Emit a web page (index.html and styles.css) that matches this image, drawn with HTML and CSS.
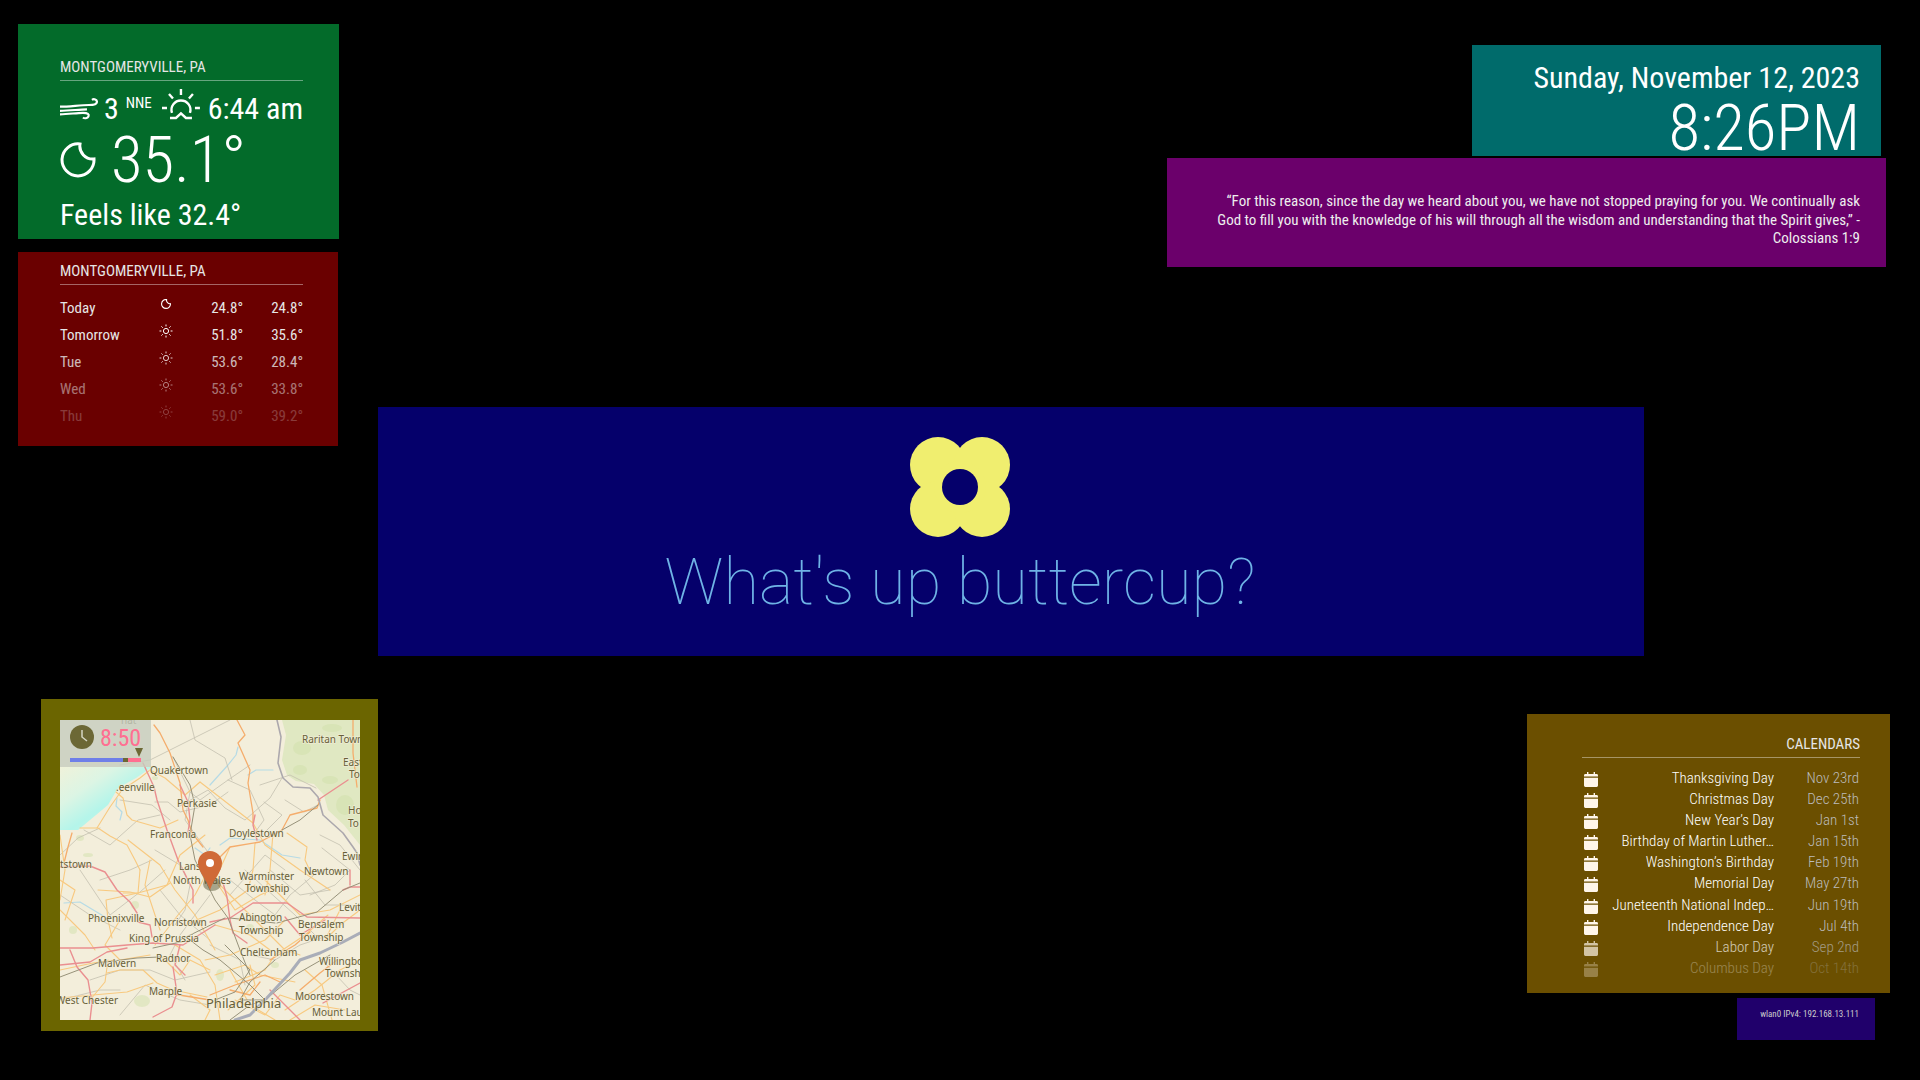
FILE: index.html
```html
<!DOCTYPE html>
<html>
<head>
    <meta charset="UTF-8">
    <title>Mirror</title>
    <link rel="stylesheet" href="styles.css">
</head>
<body>
<svg class="defs" width="0" height="0">
    <symbol id="sun" viewBox="0 0 14 14">
        <circle cx="7" cy="7" r="2.6"/>
        <path d="M7 0.5V2.4M7 11.6V13.5M0.5 7H2.4M11.6 7H13.5M2.4 2.4L3.7 3.7M10.3 10.3L11.6 11.6M11.6 2.4L10.3 3.7M3.7 10.3L2.4 11.6"/>
    </symbol>
    <symbol id="cal" viewBox="0 0 14 15">
        <path d="M3 0h1.4v2H9.6V0H11v2h1.6A1.4 1.4 0 0 1 14 3.4V4.6H0V3.4A1.4 1.4 0 0 1 1.4 2H3zM0 5.8h14v7.8A1.4 1.4 0 0 1 12.6 15H1.4A1.4 1.4 0 0 1 0 13.6z"/>
    </symbol>
</svg>

<div class="page">

    <div class="left-top">
        <div class="panel current">
            <div class="module-header">MONTGOMERYVILLE, PA</div>
            <div class="wind-row">
                <svg class="wind-icon" width="38" height="23" viewBox="0 0 38 23">
                    <path d="M0 9.700C10 9.700 20 8 29 8C34 8 37 7 37 4.700C37 2.500 34 1.500 32 2.800"/>
                    <path d="M0 13.800C10 13.800 18 12.500 27 12.300"/>
                    <path d="M0 17.300C9 17.300 16 15.800 23 15.800C28 15.800 29.500 17.500 28.500 19.500C27.500 21.500 24.500 21.800 23 20.500"/>
                </svg>
                <span class="wind-speed">3</span>
                <sup class="wind-dir">NNE</sup>
                <svg class="sunrise-icon" width="38" height="32" viewBox="0 0 38 32">
                    <path d="M19 0V6M7 5L11 9.500M31 5L27 9.500M0 19H5M33 19H38M10 24A9.500 9.500 0 1 1 28 24"/>
                    <path d="M8 29H14L19 24.500L24 29H30"/>
                </svg>
                <span class="sun-time">6:44 am</span>
            </div>
            <div class="temp-row">
                <svg class="moon-icon" width="36" height="36" viewBox="0 0 36 36">
                    <path d="M20 2A13 13 0 0 0 34 17A16 16 0 1 1 20 2Z"/>
                </svg>
                <span class="temp">35.1°</span>
            </div>
            <div class="feels">Feels like 32.4°</div>
        </div>

        <div class="panel forecast">
            <div class="module-header">MONTGOMERYVILLE, PA</div>
            <table class="forecast-table">
                <tr class="fade-0">
                    <td class="day">Today</td>
                    <td class="ficon"><svg class="moon-small" width="10" height="10" viewBox="0 0 36 36"><path d="M20 2A13 13 0 0 0 34 17A16 16 0 1 1 20 2Z"/></svg></td>
                    <td class="num">24.8°</td><td class="num">24.8°</td>
                </tr>
                <tr class="fade-1">
                    <td class="day">Tomorrow</td>
                    <td class="ficon"><svg width="14" height="14"><use href="#sun"/></svg></td>
                    <td class="num">51.8°</td><td class="num">35.6°</td>
                </tr>
                <tr class="fade-2">
                    <td class="day">Tue</td>
                    <td class="ficon"><svg width="14" height="14"><use href="#sun"/></svg></td>
                    <td class="num">53.6°</td><td class="num">28.4°</td>
                </tr>
                <tr class="fade-3">
                    <td class="day">Wed</td>
                    <td class="ficon"><svg width="14" height="14"><use href="#sun"/></svg></td>
                    <td class="num">53.6°</td><td class="num">33.8°</td>
                </tr>
                <tr class="fade-4">
                    <td class="day">Thu</td>
                    <td class="ficon"><svg width="14" height="14"><use href="#sun"/></svg></td>
                    <td class="num">59.0°</td><td class="num">39.2°</td>
                </tr>
            </table>
        </div>
    </div>

    <div class="right-top">
        <div class="panel clock">
            <div class="clock-date">Sunday, November 12, 2023</div>
            <div class="clock-time">8:26PM</div>
        </div>
        <div class="panel quote">“For this reason, since the day we heard about you, we have not stopped praying for you. We continually ask God to fill you with the knowledge of his will through all the wisdom and understanding that the Spirit gives,” - Colossians 1:9</div>
    </div>

    <div class="panel greeting">
        <svg class="flower" width="100" height="100" viewBox="0 0 100 100">
            <circle cx="28" cy="28" r="28"/>
            <circle cx="72" cy="28" r="28"/>
            <circle cx="28" cy="72" r="28"/>
            <circle cx="72" cy="72" r="28"/>
            <circle cx="50" cy="50" r="26"/>
            <circle class="flower-hole" cx="50" cy="50" r="18"/>
        </svg>
        <div class="greeting-text">What's up buttercup?</div>
    </div>

    <div class="panel radar">
        <div class="map">
            <svg class="map-svg" width="300" height="300" viewBox="0 0 300 300">
                <defs>
                    <linearGradient id="lake" x1="0" y1="0" x2="1" y2="1">
                        <stop offset="0" stop-color="#f0f2da"/>
                        <stop offset="0.3" stop-color="#dcf5e4"/>
                        <stop offset="0.55" stop-color="#b4f5ea"/>
                        <stop offset="0.78" stop-color="#c8f5e4"/>
                        <stop offset="1" stop-color="#eef3dc"/>
                    </linearGradient>
                </defs>
                <rect class="land" width="300" height="300"/>
                <polygon class="woods" points="222,0 300,0 300,125 284,105 268,90 264,75 254,64 236,61 227,55 222,40 226,15"/>
                <g class="woods-dark">
                    <ellipse cx="242" cy="28" rx="9" ry="7"/><ellipse cx="270" cy="60" rx="8" ry="4"/>
                    <ellipse cx="285" cy="85" rx="9" ry="10"/><ellipse cx="240" cy="50" rx="7" ry="5"/>
                    <ellipse cx="272" cy="8" rx="10" ry="4"/><ellipse cx="82" cy="281" rx="8" ry="6"/>
                    <ellipse cx="13" cy="210" rx="4" ry="4"/><ellipse cx="20" cy="118" rx="4" ry="3"/>
                    <ellipse cx="28" cy="135" rx="5" ry="2"/><ellipse cx="190" cy="208" rx="4" ry="4"/>
                    <ellipse cx="160" cy="255" rx="4" ry="6"/><ellipse cx="75" cy="185" rx="4" ry="4"/>
                    <ellipse cx="215" cy="245" rx="4" ry="3"/><ellipse cx="95" cy="58" rx="3" ry="2"/>
                </g>
                <polygon class="lake" points="0,47 92,47 76,58 58,68 48,85 30,100 18,110 0,110"/>
                <g class="water">
                    <polyline points="150,65 168,45 176,35 178,27"/>
                    <polyline points="188,55 196,50 213,50"/>
                    <polyline points="57,78 56,86 62,92 60,100"/>
                    <polyline points="160,125 170,118 200,120 222,135 240,138"/>
                    <polyline points="135,128 145,135 150,128"/>
                    <polyline points="4,183 20,182 30,188 50,200"/>
                </g>

                <g class="minor">
                    <polyline points="113,37 130,72 140,80 168,60 190,45"/>
                    <polyline points="120,86 148,70 165,88 185,100 210,78 222,58"/>
                    <polyline points="130,72 125,100 150,135"/>
                    <polyline points="168,60 190,70 204,100 193,115"/>
                    <polyline points="200,65 230,55 256,68"/>
                    <polyline points="225,80 244,92 258,85"/>
                    <polyline points="204,82 222,95 205,112"/>
                    <polyline points="60,80 92,85 110,100"/>
                    <polyline points="95,82 108,82 120,92 150,85 168,72"/>
                    <polyline points="24,110 50,125 78,100 100,95"/>
                    <polyline points="0,135 18,118 40,108"/>
                    <polyline points="60,45 90,40 110,30 150,10 170,0"/>
                    <polyline points="130,0 135,20 165,38 172,60"/>
                    <polyline points="95,130 120,145 130,165 125,190 115,205"/>
                    <polyline points="150,175 120,215 110,235 125,260"/>
                    <polyline points="170,175 205,135 225,150"/>
                    <polyline points="170,160 195,180 215,195 230,175 260,150"/>
                    <polyline points="185,150 235,195 260,220"/>
                    <polyline points="260,115 280,125 300,150"/>
                    <polyline points="262,128 290,150 275,165 250,175"/>
                    <polyline points="20,150 50,195 80,172 105,150"/>
                    <polyline points="0,175 30,195 60,210"/>
                    <polyline points="30,260 60,250 90,250 115,260 150,252"/>
                    <polyline points="60,295 85,265 120,280 150,285"/>
                    <polyline points="0,280 40,270 60,270"/>
                    <polyline points="190,235 215,240 240,225 270,215"/>
                    <polyline points="150,225 180,240 185,265"/>
                    <polyline points="245,160 265,185 290,185"/>
                    <polyline points="262,240 290,270 300,275"/>
                    <polyline points="210,150 240,175 270,170"/>
                    <polyline points="100,170 120,195 150,220"/>
                    <polyline points="40,160 70,150 92,140"/>
                </g>

                <g class="secondary">
                    <polyline points="37,108 50,87 62,70 80,58 90,50"/>
                    <polyline points="56,72 63,78 67,95 72,100 100,108 118,100"/>
                    <polyline points="20,108 38,108 50,116 67,125 75,140 80,150"/>
                    <polyline points="140,62 193,103 205,125 240,150 270,170"/>
                    <polyline points="90,50 105,58 125,75 140,62"/>
                    <polyline points="68,120 100,145 115,170 135,195 155,230"/>
                    <polyline points="80,150 78,173 46,180 48,200 52,218"/>
                    <polyline points="38,170 70,172 90,177 110,163"/>
                    <polyline points="63,173 78,173 107,165 120,135 145,115"/>
                    <polyline points="213,113 210,150 205,175"/>
                    <polyline points="195,123 193,150 188,170"/>
                    <polyline points="227,113 247,127 245,140 252,155"/>
                    <polyline points="150,147 135,175 118,195 95,225"/>
                    <polyline points="170,127 155,160 175,190 200,175 223,165"/>
                    <polyline points="155,160 195,200 225,230 240,235"/>
                    <polyline points="0,250 33,243 55,240"/>
                    <polyline points="0,278 33,275 67,272 93,263"/>
                    <polyline points="47,253 60,250 83,250 97,263 113,270 147,277"/>
                    <polyline points="30,280 45,262 48,240"/>
                    <polyline points="100,210 85,165 90,140"/>
                    <polyline points="5,200 15,170 0,160"/>
                    <polyline points="115,225 140,240 155,265 160,300"/>
                    <polyline points="145,240 170,235 205,220 225,200"/>
                    <polyline points="175,262 205,250 215,235 245,215 268,195"/>
                    <polyline points="168,290 195,265 190,245"/>
                    <polyline points="225,290 255,270 280,250 300,240"/>
                    <polyline points="230,300 255,285 285,290"/>
                    <polyline points="155,255 185,245 200,255 235,262"/>
                    <polyline points="130,275 150,290 145,300"/>
                    <polyline points="280,190 265,220 280,205 300,190"/>
                    <polyline points="245,250 262,265 272,300"/>
                    <polyline points="155,205 190,215 210,230"/>
                    <polyline points="100,235 120,255 130,240 150,250"/>
                    <polyline points="175,280 205,295 220,275 235,280"/>
                    <polyline points="0,115 5,150 0,180"/>
                    <polyline points="205,160 240,195 270,190 300,175"/>
                    <polyline points="125,205 160,190 195,165"/>
                    <polyline points="60,200 45,225 60,240 90,235"/>
                    <polyline points="170,250 190,285 215,300"/>
                    <polyline points="0,190 25,215 35,230"/>
                </g>

                <g class="primary">
                    <polyline points="94,5 100,13 110,33 120,63 123,90 128,100 132,113 143,127"/>
                    <polyline points="177,0 185,15 178,23 190,50 188,63 193,93 193,103"/>
                    <polyline points="293,0 293,33 297,67"/>
                    <polyline points="222,110 230,95 257,88 260,80"/>
                    <polyline points="222,110 200,122 170,127 150,147"/>
                    <polyline points="12,113 8,127 4,143"/>
                    <polyline points="210,240 235,225 250,212"/>
                    <polyline points="150,275 175,265 205,255 220,262"/>
                    <polyline points="113,274 150,280"/>
                    <polyline points="240,270 260,253 277,240"/>
                    <polyline points="170,270 190,275 200,262"/>
                </g>

                <g class="trunk">
                    <polyline points="83,43 94,67 97,80 107,110 118,140 133,170 133,183"/>
                    <polyline points="0,147 30,146 45,152 57,170 70,182 77,193 78,202 90,205 92,217"/>
                    <polyline points="0,228 33,228 67,225 93,223 123,225 155,205"/>
                    <polyline points="0,245 30,242 47,232 67,228"/>
                    <polyline points="10,230 17,247 28,260 32,283 30,300"/>
                    <polyline points="113,247 117,273 112,287 93,297"/>
                    <polyline points="150,202 170,198 193,183 227,183 247,197 300,198"/>
                    <polyline points="163,163 167,177 170,200 173,213 187,223"/>
                    <polyline points="258,80 288,60"/>
                    <polyline points="195,95 193,105 197,120"/>
                    <polyline points="283,170 290,167 300,167"/>
                    <polyline points="263,283 300,263"/>
                    <polyline points="120,65 128,82 130,100 128,112"/>
                    <polyline points="125,255 115,245 120,225"/>
                    <polyline points="210,270 230,290 240,300"/>
                    <polyline points="225,197 240,215 265,200"/>
                    <polyline points="290,150 290,165"/>
                </g>

                <g class="motorway">
                    <polyline points="113,37 130,65 135,85 130,115 135,140 155,180 168,198 180,230 190,255"/>
                    <polyline points="0,257 37,243 77,238 100,237"/>
                    <polyline points="93,228 130,220 143,230 160,240 190,265 205,280"/>
                    <polyline points="217,203 257,192 283,170 300,163"/>
                    <polyline points="170,198 215,203"/>
                    <polyline points="120,220 165,198"/>
                    <polyline points="165,225 190,250 175,272 155,280"/>
                    <polyline points="205,280 180,280 190,262 215,240"/>
                    <polyline points="222,110 240,100 258,85"/>
                    <polyline points="170,300 190,285 205,280 235,255 270,235"/>
                </g>

                <polyline class="river" points="217,0 221,17 218,43 223,58 233,67 250,68 258,77 263,95 283,113 293,127 297,133 300,145"/>
                <polyline class="river-wide" points="300,213 283,222 260,233 240,240 230,253 217,267 205,280 190,295 175,300"/>

                <g class="labels">
                    <text x="61" y="4">nat</text>
                    <text x="242" y="23">Raritan Town</text>
                    <text x="283" y="46">East</text>
                    <text x="289" y="58">To</text>
                    <text x="288" y="94">Ho</text>
                    <text x="288" y="107">To</text>
                    <text x="90" y="54">Quakertown</text>
                    <text x="56" y="71">.eenville</text>
                    <text x="117" y="87">Perkasie</text>
                    <text x="90" y="118">Franconia</text>
                    <text x="169" y="117">Doylestown</text>
                    <text x="282" y="140">Ewing</text>
                    <text x="244" y="155">Newtown</text>
                    <text x="179" y="160">Warminster</text>
                    <text x="185" y="172">Township</text>
                    <text x="0" y="148">tstown</text>
                    <text x="119" y="150">Lansdale</text>
                    <text x="113" y="164">North Wales</text>
                    <text x="28" y="202">Phoenixville</text>
                    <text x="94" y="206">Norristown</text>
                    <text x="69" y="222">King of Prussia</text>
                    <text x="179" y="201">Abington</text>
                    <text x="179" y="214">Township</text>
                    <text x="238" y="208">Bensalem</text>
                    <text x="239" y="221">Township</text>
                    <text x="279" y="191">Levit</text>
                    <text x="180" y="236">Cheltenham</text>
                    <text x="96" y="242">Radnor</text>
                    <text x="38" y="247">Malvern</text>
                    <text x="259" y="245">Willingbo</text>
                    <text x="265" y="257">Townsh</text>
                    <text x="89" y="275">Marple</text>
                    <text x="235" y="280">Moorestown</text>
                    <text x="252" y="296">Mount Lau</text>
                    <text x="-4" y="284">West Chester</text>
                    <text class="label-city" x="146" y="288">Philadelphia</text>
                </g>

                <ellipse class="pin-shadow" cx="152" cy="164" rx="9" ry="7"/>
                <path class="pin" d="M150 170C146 158 138 152 138 143A12 12 0 0 1 162 143C162 152 154 158 150 170Z"/>
                <circle class="pin-dot" cx="150" cy="143" r="4"/>
            </svg>

            <div class="radar-info">
                <svg class="radar-clock" width="24" height="24" viewBox="0 0 24 24">
                    <circle cx="12" cy="12" r="12"/>
                    <path d="M12 5V12L17 16"/>
                </svg>
                <span class="radar-time">8:50</span>
                <span class="radar-marker"></span>
                <div class="radar-bar">
                    <span class="bar-past"></span><span class="bar-now"></span><span class="bar-next"></span>
                </div>
            </div>
        </div>
    </div>

    <div class="right-bottom">
        <div class="panel calendar">
            <div class="module-header">CALENDARS</div>
            <div class="events">
                <div class="event"><svg width="14" height="15"><use href="#cal"/></svg><span class="event-title">Thanksgiving Day</span><span class="event-date">Nov 23rd</span></div>
                <div class="event"><svg width="14" height="15"><use href="#cal"/></svg><span class="event-title">Christmas Day</span><span class="event-date">Dec 25th</span></div>
                <div class="event"><svg width="14" height="15"><use href="#cal"/></svg><span class="event-title">New Year’s Day</span><span class="event-date">Jan 1st</span></div>
                <div class="event"><svg width="14" height="15"><use href="#cal"/></svg><span class="event-title">Birthday of Martin Luther…</span><span class="event-date">Jan 15th</span></div>
                <div class="event"><svg width="14" height="15"><use href="#cal"/></svg><span class="event-title">Washington’s Birthday</span><span class="event-date">Feb 19th</span></div>
                <div class="event"><svg width="14" height="15"><use href="#cal"/></svg><span class="event-title">Memorial Day</span><span class="event-date">May 27th</span></div>
                <div class="event event-gap"><svg width="14" height="15"><use href="#cal"/></svg><span class="event-title">Juneteenth National Indep…</span><span class="event-date">Jun 19th</span></div>
                <div class="event"><svg width="14" height="15"><use href="#cal"/></svg><span class="event-title">Independence Day</span><span class="event-date">Jul 4th</span></div>
                <div class="event event-fade1"><svg width="14" height="15"><use href="#cal"/></svg><span class="event-title">Labor Day</span><span class="event-date">Sep 2nd</span></div>
                <div class="event event-fade2"><svg width="14" height="15"><use href="#cal"/></svg><span class="event-title">Columbus Day</span><span class="event-date">Oct 14th</span></div>
            </div>
        </div>
        <div class="panel ip">wlan0 IPv4: 192.168.13.111</div>
    </div>

</div>
</body>
</html>
```

FILE: styles.css
```css
html, body {
    margin: 0;
    height: 100%;
    background-color: #000;
}
body {
    font-family: "Roboto Condensed", Roboto, sans-serif;
    font-stretch: 75%;
    color: #fff;
    overflow: hidden;
}
.defs {
    position: absolute;
}
.page {
    width: 1920px;
    height: 1080px;
    display: grid;
    grid-template-columns: 378px 1266px 1fr;
    grid-template-rows: 407px 292px 1fr;
}
.panel {
    box-sizing: border-box;
}
.module-header {
    font-size: 15px;
    line-height: 18px;
    padding-bottom: 4px;
    border-bottom: 1px solid rgba(255,255,255,0.4);
    color: #e6e6e6;
}

/* left column */
.left-top {
    grid-column: 1;
    grid-row: 1 / 3;
    padding: 24px 0 0 18px;
}
.current {
    width: 321px;
    height: 215px;
    background-color: #036b2a;
    padding: 34px 36px 0 42px;
}
.wind-row {
    display: flex;
    align-items: center;
    height: 36px;
    margin-top: 9px;
    font-size: 30px;
    white-space: nowrap;
}
.wind-icon path, .sunrise-icon path {
    fill: none;
    stroke: #fff;
    stroke-width: 2.2;
}
.wind-speed {
    margin-left: 6px;
}
.wind-dir {
    font-size: 15px;
    margin: -10px 0 0 7px;
}
.sunrise-icon {
    margin: -6px 0 0 10px;
}
.sunrise-icon path {
    stroke-width: 2.4;
}
.sun-time {
    margin-left: 8px;
}
.temp-row {
    display: flex;
    align-items: center;
    height: 62px;
    font-size: 65px;
    font-weight: 300;
    margin-top: 3px;
}
.moon-icon path {
    fill: none;
    stroke: #fff;
    stroke-width: 3;
}
.temp {
    margin-left: 15px;
}
.feels {
    font-size: 30px;
    line-height: 36px;
    margin-top: 6px;
}
.forecast {
    width: 320px;
    height: 194px;
    margin-top: 13px;
    background-color: #6a0000;
    padding: 10px 35px 0 42px;
}
.forecast-table {
    width: 243px;
    table-layout: fixed;
    border-collapse: collapse;
    margin-top: 9px;
    font-size: 15px;
    color: #e6e6e6;
}
.forecast-table td {
    height: 27px;
    padding: 0;
    vertical-align: middle;
}
.day {
    width: 99px;
}
.ficon {
    width: 14px;
}
.ficon svg {
    display: block;
    margin: -8px auto 0 auto;
    fill: none;
    stroke: #fff;
    stroke-width: 1;
}
.ficon .moon-small {
    stroke-width: 4;
}
.num {
    width: 70px;
    text-align: right;
}
.num + .num {
    width: 60px;
}
.fade-0 { opacity: 1; }
.fade-1 { opacity: 1; }
.fade-2 { opacity: 0.8; }
.fade-3 { opacity: 0.5; }
.fade-4 { opacity: 0.25; }

/* top right */
.right-top {
    grid-column: 2 / 4;
    grid-row: 1;
    display: flex;
    flex-direction: column;
    align-items: flex-end;
    padding: 45px 34px 0 0;
}
.clock {
    width: 409px;
    height: 111px;
    margin-right: 5px;
    background-color: #006b6b;
    padding: 17px 21px 0 0;
    text-align: right;
}
.clock-date {
    font-size: 30px;
    line-height: 32px;
}
.clock-time {
    font-size: 65px;
    line-height: 58px;
    font-weight: 300;
    margin-top: 5px;
}
.quote {
    width: 719px;
    height: 109px;
    margin-top: 2px;
    background-color: #6b006b;
    padding: 34px 26px 0 50px;
    text-align: right;
    font-size: 15px;
    line-height: 18.500px;
    color: #eee;
}

/* greeting */
.greeting {
    grid-column: 2;
    grid-row: 2;
    align-self: start;
    height: 249px;
    background-color: #05006b;
    padding: 30px 102px 0 0;
    text-align: center;
}
.flower {
    display: block;
    margin: 0 auto;
    fill: #f0ee6f;
}
.flower-hole {
    fill: #05006b;
}
.greeting-text {
    font-family: Roboto, sans-serif;
    font-stretch: normal;
    font-size: 65px;
    font-weight: 100;
    line-height: 76px;
    margin-top: 7px;
    color: #6fb3e6;
    white-space: nowrap;
}

/* radar map */
.radar {
    grid-column: 1;
    grid-row: 3;
    width: 337px;
    height: 332px;
    margin-left: 41px;
    background-color: #6b6500;
    padding: 21px 0 0 19px;
}
.map {
    position: relative;
    width: 300px;
    height: 300px;
    overflow: hidden;
}
.map-svg {
    display: block;
}
.land { fill: #f3eedb; }
.woods { fill: #e0e8c2; }
.woods-dark { fill: #cfe0a8; opacity: 0.45; }
.lake { fill: url(#lake); }
.map-svg polyline {
    fill: none;
    stroke-linejoin: round;
    stroke-linecap: round;
}
.water polyline { stroke: #b6dbe6; stroke-width: 1.2; }
.minor polyline { stroke: #c4c0b0; stroke-width: 0.8; }
.secondary polyline { stroke: #f8c97f; stroke-width: 1.1; }
.primary polyline { stroke: #f5ad6c; stroke-width: 1.3; }
.trunk polyline { stroke: #ea8f90; stroke-width: 1.4; }
.motorway polyline { stroke: #97927a; stroke-width: 1; }
.map-svg .river { stroke: #aca8ad; stroke-width: 1.6; }
.map-svg .river-wide { stroke: #a9adb8; stroke-width: 3; }
.labels text {
    font-family: "Noto Sans", sans-serif;
    font-stretch: normal;
    font-size: 10px;
    fill: #675f38;
    stroke: #f3eedb;
    stroke-width: 1.5px;
    stroke-opacity: 0.7;
    paint-order: stroke;
}
.labels .label-city {
    font-size: 13px;
}
.pin-shadow { fill: #5c5a3a; opacity: 0.5; }
.pin { fill: #d06a37; }
.pin-dot { fill: #fff; }
.radar-info {
    position: absolute;
    left: 0;
    top: 0;
    width: 91px;
    height: 47px;
    background-color: rgba(198,204,190,0.8);
}
.radar-clock {
    position: absolute;
    left: 10px;
    top: 5px;
}
.radar-clock circle { fill: #6c6835; }
.radar-clock path {
    fill: none;
    stroke: #d5d6c4;
    stroke-width: 1.5;
}
.radar-time {
    position: absolute;
    left: 40px;
    top: 3px;
    font-size: 24px;
    line-height: 30px;
    color: #ff6f91;
}
.radar-marker {
    position: absolute;
    left: 75px;
    top: 28px;
    border-left: 4px solid transparent;
    border-right: 4px solid transparent;
    border-top: 9px solid #6c6835;
}
.radar-bar {
    position: absolute;
    left: 10px;
    top: 38px;
    display: flex;
    width: 71px;
    height: 4px;
}
.bar-past { width: 53px; background-color: #6f7fe8; }
.bar-now { width: 5px; background-color: #6c6835; }
.bar-next { width: 13px; background-color: #ff6f91; }

/* bottom right */
.right-bottom {
    grid-column: 2 / 4;
    grid-row: 3;
    display: flex;
    flex-direction: column;
    align-items: flex-end;
    padding: 15px 30px 0 0;
}
.calendar {
    width: 363px;
    height: 279px;
    background-color: #6b4f00;
    padding: 21px 30px 0 55px;
}
.calendar .module-header {
    text-align: right;
}
.events {
    margin-top: 9px;
    font-size: 15px;
}
.event {
    display: flex;
    align-items: center;
    height: 21px;
    color: #fff;
}
.event-gap {
    margin-top: 1px;
}
.event svg {
    flex: none;
    margin: 3px 0 0 2px;
    fill: #fff6ea;
}
.event-title {
    margin-left: auto;
    text-align: right;
    font-weight: 300;
    white-space: nowrap;
}
.event-date {
    flex: none;
    width: 86px;
    padding-right: 1px;
    box-sizing: border-box;
    text-align: right;
    font-weight: 300;
    color: #bbb;
}
.event-fade1 { opacity: 0.7; }
.event-fade2 { opacity: 0.3; }
.ip {
    width: 138px;
    height: 42px;
    margin: 5px 15px 0 0;
    background-color: #20006b;
    padding: 9px 16px 0 0;
    text-align: right;
    font-size: 9px;
    line-height: 14px;
    color: #ccc;
}
```
